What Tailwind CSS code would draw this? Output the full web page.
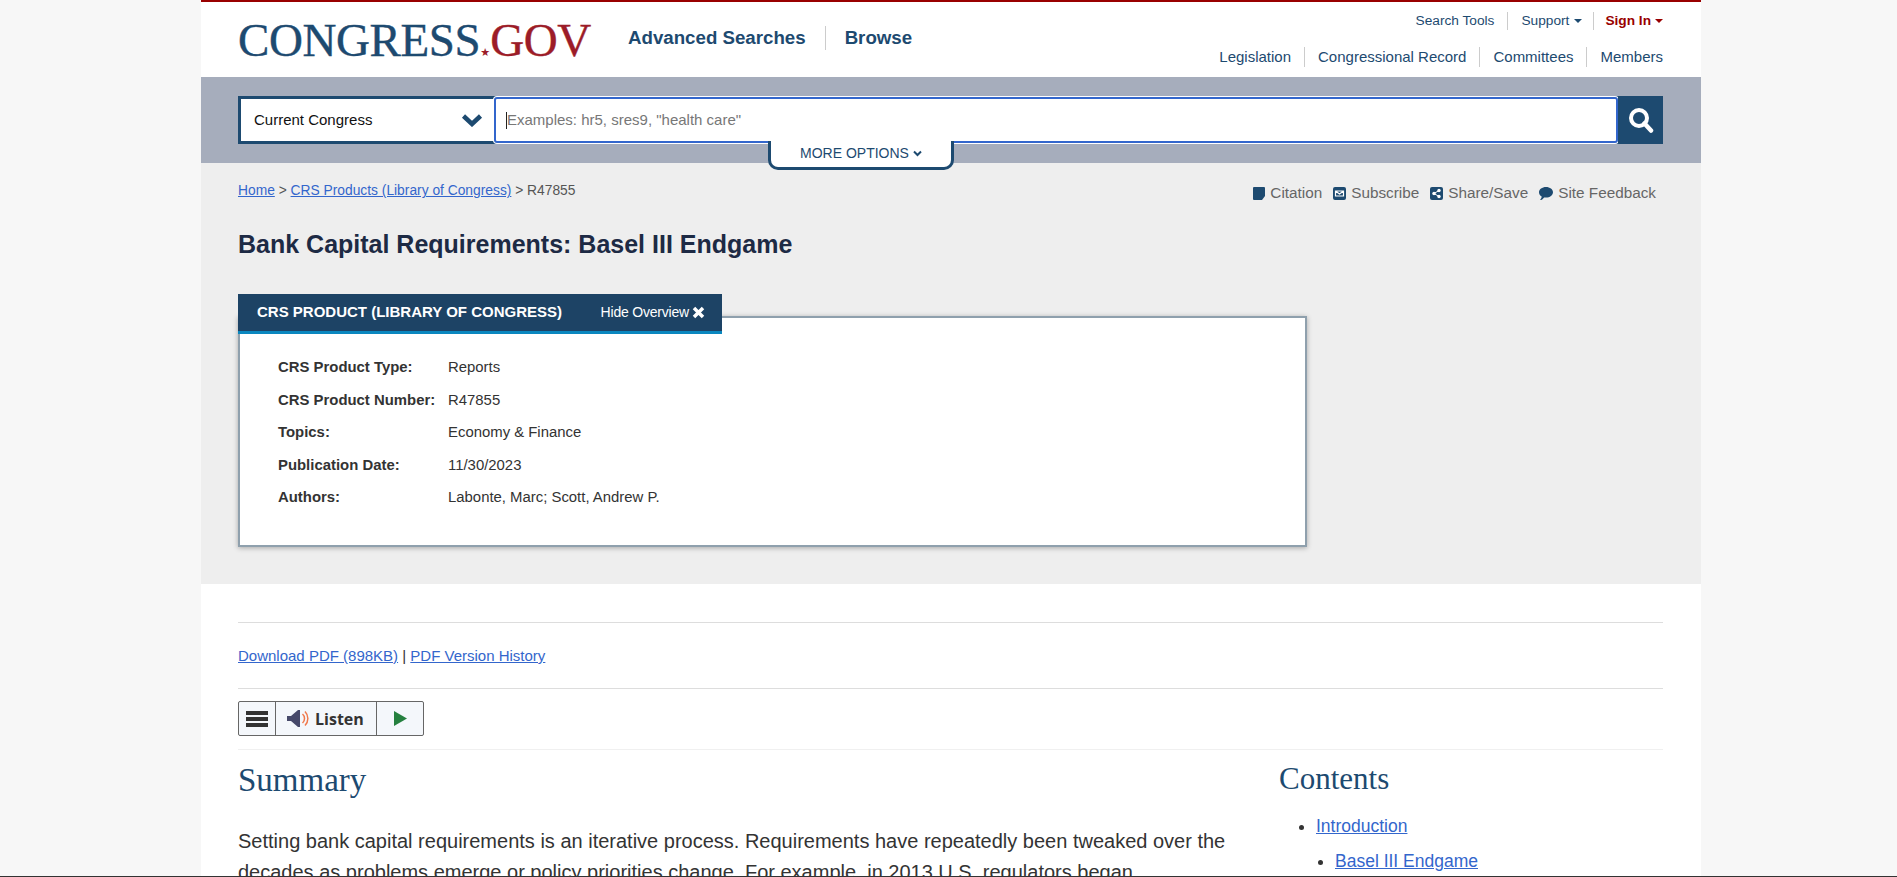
<!DOCTYPE html>
<html lang="en">
<head>
  <meta charset="UTF-8">
  <title>Bank Capital Requirements: Basel III Endgame | Congress.gov</title>
  <script src="https://cdn.jsdelivr.net/npm/@tailwindcss/browser@4"></script>
</head>
<body class="relative h-[877px] overflow-hidden bg-[#f7f7f7] font-['Liberation_Sans',Arial,sans-serif] text-[#333]">
  <div class="ml-[201px] h-[877px] w-[1500px] overflow-hidden bg-white">

    <!-- header -->
    <header class="flex h-[77px] justify-between border-t-2 border-[#990000] pr-[38px] pl-[37px]">
      <div class="flex items-start">
        <a class="mt-[15px] flex w-[353px] items-baseline whitespace-nowrap font-['Liberation_Serif',serif] text-[47px] leading-[46px] tracking-[-0.4px] text-[#1d4a70] [-webkit-text-stroke:0.4px_#1d4a70]">CONGRESS<span class="font-['DejaVu_Sans',sans-serif] text-[11px] tracking-normal text-[#9c1c28] [-webkit-text-stroke:0]">★</span><span class="text-[#9c1c28] [-webkit-text-stroke:0.4px_#9c1c28]">GOV</span></a>
        <nav class="mt-[24px] ml-[37px] flex items-center text-[18.700px] leading-[24px] font-bold text-[#1d4a70]">
          <a class="pr-[19px]">Advanced Searches</a>
          <a class="border-l border-[#ccc] pl-[19px]">Browse</a>
        </nav>
      </div>
      <div class="flex flex-col items-end text-[15px] text-[#1d4a70]">
        <div class="mt-[10px] flex h-[18px] items-center text-[13.700px] leading-[18px]">
          <a class="pr-[13px]">Search Tools</a>
          <a class="flex items-center gap-[5px] border-l border-[#ccc] pr-[11px] pl-[13px]">Support <span class="h-0 w-0 border-x-[4px] border-t-[4px] border-x-transparent border-t-[#1d4a70]"></span></a>
          <a class="flex items-center gap-1 border-l border-[#ccc] pl-[11px] font-bold text-[#990000]">Sign In <span class="h-0 w-0 border-x-[4px] border-t-[4px] border-x-transparent border-t-[#990000]"></span></a>
        </div>
        <div class="mt-[17px] flex h-[20px] items-center leading-[20px]">
          <a class="pr-[13px]">Legislation</a>
          <a class="border-l border-[#ccc] px-[13px]">Congressional Record</a>
          <a class="border-l border-[#ccc] px-[13px]">Committees</a>
          <a class="border-l border-[#ccc] pl-[13px]">Members</a>
        </div>
      </div>
    </header>

    <!-- search band -->
    <div class="relative h-[86px] bg-[#a6adbc] pt-[19px] pr-[38px] pl-[37px]">
      <div class="flex h-[48px]">
        <div class="flex w-[256px] items-center justify-between border-[3px] border-r-0 border-[#1d4a70] bg-white pr-[11px] pl-[13px] text-[15px] text-[#111]">
          Current Congress
          <svg class="h-[14px] w-[22px]" viewBox="0 0 22 14"><path d="M2.500 3l8.500 8 8.500-8" fill="none" stroke="#1d4a70" stroke-width="4.500"/></svg>
        </div>
        <div class="flex-1 border-y border-[#1d4a70]">
          <div class="flex h-full items-center rounded-[3px] border-2 border-[#3366cc] bg-white pl-[10px] text-[15px] text-[#777] shadow-[0_0_0_1px_white]">
            <span class="h-[17px] border-l border-[#222]"></span>Examples: hr5, sres9, "health care"
          </div>
        </div>
        <button class="flex w-[45px] items-center justify-center bg-[#1d4a70]">
          <svg class="h-[26px] w-[26px]" viewBox="0 0 26 26"><circle cx="11" cy="11" r="8" fill="none" stroke="white" stroke-width="4"/><path d="M16.500 16.500l6.500 7" stroke="white" stroke-width="4.500" stroke-linecap="round"/></svg>
        </button>
      </div>
      <div class="absolute top-[64px] left-[567px] flex h-[29px] w-[186px] items-start justify-center gap-1 rounded-b-[10px] border-[3px] border-t-0 border-[#1d4a70] bg-white pt-[2px] text-[14px] leading-[20px] text-[#1d4a70]">
        MORE OPTIONS
        <svg class="mt-[7px] h-[7px] w-[9px]" viewBox="0 0 9 7"><path d="M1 1.500l3.500 3.500L8 1.500" fill="none" stroke="#1d4a70" stroke-width="2"/></svg>
      </div>
    </div>

    <!-- overview section -->
    <section class="h-[421px] bg-[#eeeeee] pr-[38px] pl-[37px]">
      <div class="flex justify-between pt-[20px] text-[13.800px] leading-[16px]">
        <div class="text-[#555]"><a class="text-[#3366cc] underline">Home</a> &gt; <a class="text-[#3366cc] underline">CRS Products (Library of Congress)</a> &gt; R47855</div>
        <div class="mt-[2px] mr-[7px] flex gap-[11px] text-[15.300px] text-[#666]">
          <span class="flex items-center gap-[5px]"><svg class="h-[13px] w-[12px]" viewBox="0 0 12 13"><path d="M1 0h10a1 1 0 0 1 1 1v8l-3 4H1a1 1 0 0 1-1-1V1a1 1 0 0 1 1-1z" fill="#1d4a70"/></svg>Citation</span>
          <span class="flex items-center gap-[5px]"><svg class="h-[13px] w-[13px]" viewBox="0 0 13 13"><rect width="13" height="13" rx="2" fill="#1d4a70"/><path d="M2.500 4h8v5h-8zM2.500 4l4 3 4-3" fill="none" stroke="white" stroke-width="1.200"/></svg>Subscribe</span>
          <span class="flex items-center gap-[5px]"><svg class="h-[13px] w-[13px]" viewBox="0 0 13 13"><rect width="13" height="13" rx="2" fill="#1d4a70"/><circle cx="4" cy="6.500" r="1.700" fill="white"/><circle cx="9" cy="3.500" r="1.700" fill="white"/><circle cx="9" cy="9.500" r="1.700" fill="white"/><path d="M4 6.500L9 3.500M4 6.500L9 9.500" stroke="white"/></svg>Share/Save</span>
          <span class="flex items-center gap-[5px]"><svg class="h-[13px] w-[14px]" viewBox="0 0 14 13"><path d="M7 0c3.900 0 7 2.300 7 5.300s-3.100 5.300-7 5.300c-.7 0-1.300-.1-1.900-.2C4 12 2.500 13 1 13c1-1 1.600-2 1.700-3.400C1 8.600 0 7 0 5.300 0 2.300 3.100 0 7 0z" fill="#1d4a70"/></svg>Site Feedback</span>
        </div>
      </div>
      <h1 class="mt-[28px] text-[25px] leading-[30px] font-bold text-[#1d2a44]">Bank Capital Requirements: Basel III Endgame</h1>

      <div class="relative mt-[35px] w-[1069px]">
        <div class="relative z-10 flex h-[40px] w-[484px] items-center justify-between border-b-[3px] border-[#0a87bf] bg-[#1d4365] pr-[17px] pl-[19px] text-white">
          <span class="text-[15px] font-bold">CRS PRODUCT (LIBRARY OF CONGRESS)</span>
          <span class="flex items-center gap-[3px] text-[14px] tracking-[-0.2px]">Hide Overview
            <svg class="h-[13px] w-[13px]" viewBox="0 0 13 13"><path d="M2 2l9 9M11 2l-9 9" stroke="white" stroke-width="3.500"/></svg>
          </span>
        </div>
        <div class="-mt-[18px] h-[231px] border-2 border-[#8fa0ad] bg-white pt-[39px] pl-[38px] shadow-[0_1px_5px_rgba(0,0,0,0.3)]">
          <dl class="grid grid-cols-[170px_1fr] gap-y-[12.500px] text-[14.900px] leading-[20px]">
            <dt class="font-bold">CRS Product Type:</dt><dd>Reports</dd>
            <dt class="font-bold">CRS Product Number:</dt><dd>R47855</dd>
            <dt class="font-bold">Topics:</dt><dd>Economy &amp; Finance</dd>
            <dt class="font-bold">Publication Date:</dt><dd>11/30/2023</dd>
            <dt class="font-bold">Authors:</dt><dd>Labonte, Marc; Scott, Andrew P.</dd>
          </dl>
        </div>
      </div>
    </section>

    <!-- report body -->
    <main class="pr-[38px] pl-[37px]">
      <div class="mt-[38px] border-t border-[#dddddd] pt-[23px] pb-[22px] text-[15px] leading-[20px]">
        <a class="text-[#3366cc] underline">Download PDF (898KB)</a> | <a class="text-[#3366cc] underline">PDF Version History</a>
      </div>
      <div class="border-t border-[#dddddd] pt-[12px] pb-[13px]">
        <div class="flex h-[35px] w-[186px] rounded-[2px] border border-[#666] bg-[#f4f7fb] font-['Open_Sans',sans-serif] text-[16px] font-bold text-[#333]">
          <span class="flex w-[37px] flex-col justify-center gap-[2px] border-r border-[#666] px-[7px]">
            <i class="h-[4px] bg-[#333]"></i><i class="h-[4px] bg-[#333]"></i><i class="h-[4px] bg-[#333]"></i>
          </span>
          <span class="flex w-[101px] items-center gap-[6px] border-r border-[#666] pl-[11px]">
            <svg class="h-[17px] w-[22px]" viewBox="0 0 22 17"><path d="M0 6h4l7-6h2v17h-2l-7-6H0z" fill="#46496a"/><path d="M15.500 4a6 6 0 0 1 0 9M18 1.500a10 10 0 0 1 0 14" fill="none" stroke="#f0784a" stroke-width="1.500"/></svg>
            Listen
          </span>
          <span class="flex flex-1 items-center justify-center">
            <svg class="h-[15px] w-[13px]" viewBox="0 0 13 15"><path d="M0 0l13 7.500L0 15z" fill="#25803f"/></svg>
          </span>
        </div>
      </div>
      <div class="flex gap-[41px] border-t border-[#f0f0f0]">
        <div class="w-[1000px] shrink-0">
          <h2 class="mt-[10px] font-['Liberation_Serif',serif] text-[33px] leading-[40px] text-[#1d4a70]">Summary</h2>
          <p class="mt-[26px] text-[20px] leading-[31px]">Setting bank capital requirements is an iterative process. Requirements have repeatedly been tweaked over the decades as problems emerge or policy priorities change. For example, in 2013 U.S. regulators began</p>
        </div>
        <div class="flex-1">
          <h2 class="mt-[11px] font-['Liberation_Serif',serif] text-[31px] leading-[36px] text-[#1d4a70]">Contents</h2>
          <ul class="mt-[17px] list-disc pl-[37px] text-[17.500px] leading-[24px] marker:text-[#333]">
            <li><a class="text-[#3366cc] underline">Introduction</a></li>
            <li class="mt-[11px] ml-[19px]"><a class="text-[#3366cc] underline">Basel III Endgame</a></li>
          </ul>
        </div>
      </div>
    </main>
  </div>
  <div class="absolute bottom-0 left-0 h-px w-full bg-[#333]"></div>
</body>
</html>
